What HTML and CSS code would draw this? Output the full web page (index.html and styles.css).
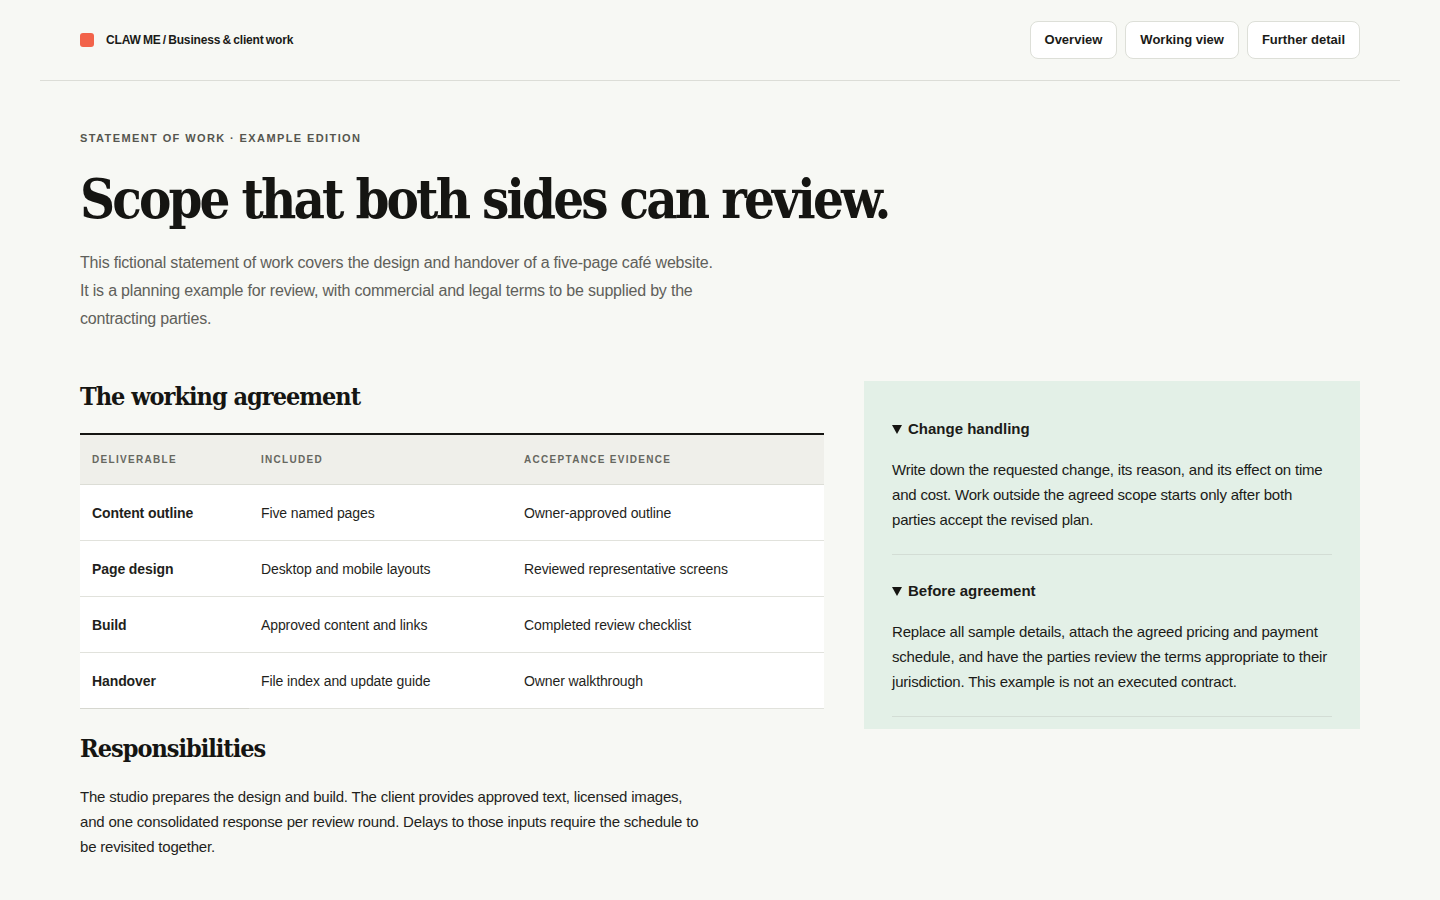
FILE: index.html
```html
<!DOCTYPE html>
<html lang="en">
<head>
<meta charset="UTF-8">
<meta name="viewport" content="width=device-width, initial-scale=1.0">
<title>Statement of Work</title>
<link rel="stylesheet" href="styles.css">
</head>
<body>
<header class="topbar">
  <div class="brand">
    <span class="brand-mark"></span>
    <span class="brand-name">CLAW ME / Business &amp; client work</span>
  </div>
  <nav class="nav">
    <a href="#" class="nav-btn">Overview</a>
    <a href="#" class="nav-btn">Working view</a>
    <a href="#" class="nav-btn">Further detail</a>
  </nav>
</header>

<main class="page">
  <section class="intro">
    <p class="eyebrow">Statement of work · Example edition</p>
    <h1>Scope that both sides can review.</h1>
    <p class="lede">This fictional statement of work covers the design and handover of a five-page café website. It is a planning example for review, with commercial and legal terms to be supplied by the contracting parties.</p>
  </section>

  <div class="columns">
    <div class="main-col">
      <h2>The working agreement</h2>
      <table class="scope">
        <thead>
          <tr>
            <th class="col-a">Deliverable</th>
            <th class="col-b">Included</th>
            <th>Acceptance evidence</th>
          </tr>
        </thead>
        <tbody>
          <tr>
            <td class="item">Content outline</td>
            <td>Five named pages</td>
            <td>Owner-approved outline</td>
          </tr>
          <tr>
            <td class="item">Page design</td>
            <td>Desktop and mobile layouts</td>
            <td>Reviewed representative screens</td>
          </tr>
          <tr>
            <td class="item">Build</td>
            <td>Approved content and links</td>
            <td>Completed review checklist</td>
          </tr>
          <tr>
            <td class="item">Handover</td>
            <td>File index and update guide</td>
            <td>Owner walkthrough</td>
          </tr>
        </tbody>
      </table>

      <h2 class="resp-title">Responsibilities</h2>
      <p class="body-text">The studio prepares the design and build. The client provides approved text, licensed images, and one consolidated response per review round. Delays to those inputs require the schedule to be revisited together.</p>
    </div>

    <aside class="notes">
      <details open>
        <summary>Change handling</summary>
        <p>Write down the requested change, its reason, and its effect on time and cost. Work outside the agreed scope starts only after both parties accept the revised plan.</p>
      </details>
      <details open>
        <summary>Before agreement</summary>
        <p>Replace all sample details, attach the agreed pricing and payment schedule, and have the parties review the terms appropriate to their jurisdiction. This example is not an executed contract.</p>
      </details>
    </aside>
  </div>
</main>
</body>
</html>
```

FILE: styles.css
```css
body, html {
  margin: 0;
  background: #f7f8f4;
  color: #1b1b18;
  font-family: "Liberation Sans", Arial, sans-serif;
}

.topbar {
  margin: 0 40px;
  padding: 0 40px;
  height: 81px;
  border-bottom: 1px solid #dcddd7;
  display: flex;
  align-items: center;
  justify-content: space-between;
  box-sizing: border-box;
}

.brand {
  display: flex;
  align-items: center;
  gap: 12px;
}

.brand-mark {
  width: 14px;
  height: 14px;
  border-radius: 3px;
  background: #f2634a;
}

.brand-name {
  font-size: 12px;
  font-weight: bold;
  letter-spacing: -0.15px;
  word-spacing: -1px;
}

.nav {
  display: flex;
  gap: 8px;
}

.nav-btn {
  display: block;
  padding: 0 14px;
  height: 38px;
  line-height: 36px;
  box-sizing: border-box;
  border: 1px solid #dddfd8;
  border-radius: 8px;
  background: #fff;
  color: #1b1b18;
  font-size: 13px;
  font-weight: bold;
  text-decoration: none;
}

.page {
  padding: 0 80px 40px;
}

.intro {
  padding-top: 51px;
}

.eyebrow {
  margin: 0;
  font-size: 11px;
  font-weight: bold;
  letter-spacing: 1.4px;
  text-transform: uppercase;
  color: #55564f;
}

h1 {
  margin: 22px 0 0;
  font-family: "DejaVu Serif Condensed", "DejaVu Serif", serif;
  font-stretch: condensed;
  font-size: 54px;
  line-height: 66px;
  letter-spacing: -2.9px;
  font-weight: bold;
  color: #151512;
}

.lede {
  margin: 17px 0 0;
  max-width: 642px;
  font-size: 16px;
  line-height: 28px;
  color: #5f605a;
  letter-spacing: -0.2px;
}

.columns {
  display: grid;
  grid-template-columns: 3fr 2fr;
  gap: 40px;
  margin-top: 48px;
  align-items: start;
}

h2 {
  margin: 0;
  font-family: "DejaVu Serif Condensed", "DejaVu Serif", serif;
  font-stretch: condensed;
  font-size: 25px;
  line-height: 32px;
  letter-spacing: -1px;
  font-weight: bold;
  color: #151512;
}

.scope {
  width: 100%;
  margin-top: 20px;
  border-collapse: collapse;
  border-top: 2px solid #151512;
  font-size: 14px;
}

.scope th {
  background: #efefea;
  height: 49px;
  padding: 0 12px;
  text-align: left;
  font-size: 10px;
  font-weight: bold;
  letter-spacing: 1.3px;
  text-transform: uppercase;
  color: #66675f;
  border-bottom: 1px solid #dcddd6;
}

.scope .col-a {
  width: 145px;
}

.scope .col-b {
  width: 239px;
}

.scope td {
  background: #fff;
  height: 55px;
  padding: 0 12px;
  border-bottom: 1px solid #e1e2dc;
  color: #1f1f1c;
  letter-spacing: -0.1px;
}

.scope td.item {
  font-weight: bold;
}

.scope tr:last-child td.item {
  border-bottom-color: #d6d7d0;
}

.resp-title {
  margin-top: 24px;
}

.body-text {
  margin: 19px 0 0;
  max-width: 630px;
  font-size: 15px;
  line-height: 25px;
  color: #1f1f1c;
  letter-spacing: -0.2px;
}

.notes {
  background: #e3f0e7;
  padding: 12px 28px;
}

.notes details {
  padding: 26px 0 22px;
  border-bottom: 1px solid #d3ddd5;
}

.notes summary {
  list-style: none;
  display: flex;
  align-items: center;
  gap: 6px;
  font-size: 15px;
  line-height: 20px;
  font-weight: bold;
  cursor: pointer;
}

.notes summary::-webkit-details-marker {
  display: none;
}

.notes summary::before {
  content: "";
  width: 0;
  height: 0;
  border-left: 5px solid transparent;
  border-right: 5px solid transparent;
  border-top: 9px solid #151512;
}

.notes p {
  margin: 18px 0 0;
  font-size: 15px;
  line-height: 25px;
  letter-spacing: -0.2px;
}
```
